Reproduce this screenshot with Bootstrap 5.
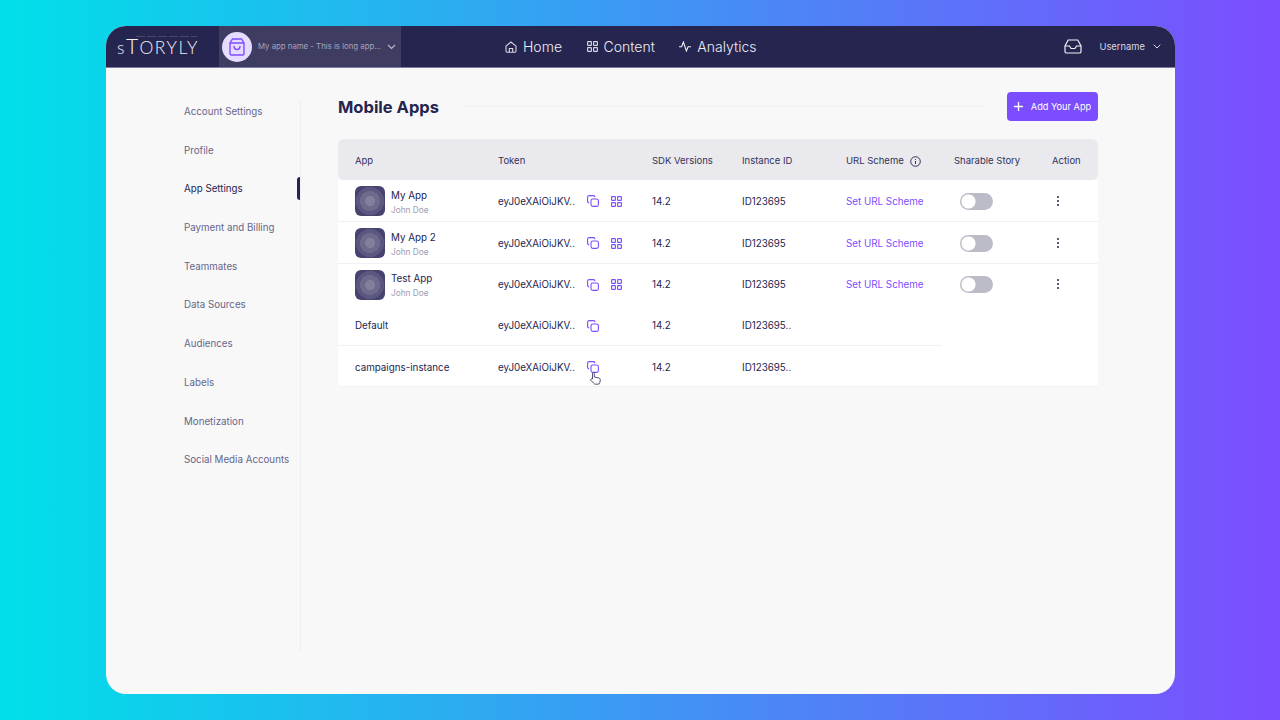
<!DOCTYPE html>
<html lang="en">
<head>
<meta charset="utf-8">
<title>Mobile Apps</title>
<link href="https://cdn.jsdelivr.net/npm/bootstrap@5.3.0/dist/css/bootstrap.min.css" rel="stylesheet">
<style>
html,body{height:720px;overflow:hidden}
body{background:linear-gradient(90deg,#00e0e9 0%,#7c4dff 100%);font-family:Inter,"Noto Sans",sans-serif;color:#24244f;padding:26px 105px 26px 106px}
.app-window{height:668px;background:#f8f8f8;border-radius:20px;overflow:hidden}
.top-bar{height:42px;background:#25254f;border-bottom:1px solid #7d7ca0;color:#fff}
.brand-text{width:113px;padding-left:11px;font-family:Lato,sans-serif;font-weight:300;font-size:17.5px;letter-spacing:1.45px;color:#f2f2f6;white-space:nowrap}
.brand-mark{position:relative;margin-top:3px}
.brand-mark::before{content:"";position:absolute;left:19px;right:2px;top:1px;height:1px;background:repeating-linear-gradient(90deg,rgba(255,255,255,.16) 0 9px,transparent 9px 11px)}
.brand-tee{font-size:21px;line-height:1}
.app-picker{width:182px;background:#3f3c62;padding-left:3px;padding-right:5px}
.app-bubble{width:30px;height:30px;border-radius:50%;background:#e6dcff;flex:none}
.app-picker-name{font-size:7.8px;color:#a5a4bb;margin-left:6px;width:131px;white-space:nowrap}
.nav-group{margin-left:104px;gap:24.5px}
.nav-entry{font-size:14px;font-weight:300;color:#eeeef4;gap:6px;text-decoration:none}
.user-group{margin-left:auto;padding-right:14px}
.user-name{font-size:9.4px;color:#d9d9e4;margin:2px 8px 0 17px}
.side-col{width:195px;height:553px;margin-top:31px;border-right:1px solid #eeeef2;padding-left:78px}
.side-list{margin-top:-6px}
.side-link{display:flex;align-items:center;height:38.7px;font-size:9.75px;color:#66668a;white-space:nowrap;text-decoration:none}
.side-link.is-on{color:#25254f;position:relative}
.side-marker{position:absolute;left:113px;top:7px;width:3px;height:23px;background:#25254f;border-radius:3px 0 0 3px}
.main-col{width:760px;margin-left:37px}
.head-row{height:29px;margin-top:24px;margin-bottom:18px}
.page-title{font-size:16.5px;font-weight:700;margin:3px 0 0;white-space:nowrap;color:#25254f}
.head-rule{flex:1;height:1px;background:#f0f0f3;margin:0 22px 0 24px}
.add-btn{height:29px;width:91px;background:#7c4dff;border:0;border-radius:4px;color:#fff;font-size:9.2px;padding:0;gap:8px}
.add-btn:hover{background:#7c4dff;color:#fff}
.app-table{table-layout:fixed;width:760px;margin:0;border-collapse:separate;border-spacing:0;font-size:9.8px;color:#25254f}
.app-table th{height:41px;background:#e9e9ee;font-weight:400;font-size:9.5px;color:#32325a;padding:3px 0 0;vertical-align:middle}
.app-table th:first-child{border-radius:6px 0 0 6px;padding-left:17px}
.app-table th:last-child{border-radius:0 6px 6px 0}
.app-table th.share-head{padding-left:12px}
.app-table td{height:41px;background:#fff;padding:3px 0 0;vertical-align:middle;border-bottom:1px solid #f1f1f4;white-space:nowrap}
.app-table td.media-cell{padding-top:1px}
.app-table tr.tall-row td{height:42px}
.app-table td:first-child{padding-left:17px}
.app-table tr.no-line td{border-bottom-color:transparent}
.app-table td.blank-line{border-bottom-color:transparent}
.app-table tr.end-row td{border-bottom-color:#f1f1f4!important;padding-top:4px}
.app-thumb{width:30px;height:30px;border-radius:6px;background:radial-gradient(circle,#827f9c 0 5px,#6d6a8c 5px 10px,#5a5780 10px 14px,#46436f 14px);flex:none}
.app-text{margin:2px 0 0 6px}
.app-sub{font-size:8.3px;color:#9c9cb2;margin-top:3px;line-height:10px}
.app-name{line-height:12px}
.token-text{width:77px;display:inline-block}
.tool-icons{gap:12px;margin:-2px 0 0 12px}
.set-link{color:#7c4dff;text-decoration:none}
.form-switch .toggle-input{width:33px;height:17px;margin:0;border:0;background-color:#bcbcc9;box-shadow:none;background-image:radial-gradient(circle at 8.5px 50%,#fff 6.7px,transparent 7.4px);background-position:0 0;background-size:auto}
.toggle-wrap{padding:0 0 0 18px;min-height:0;margin:0;display:flex}
.hand-cursor{position:absolute;left:3px;top:11px}
.copy-holder{position:relative}
</style>
</head>
<body>
<div class="app-window d-flex flex-column">
  <header class="top-bar d-flex align-items-stretch flex-shrink-0">
    <div class="brand-text d-flex align-items-center"><span class="brand-mark">s<span class="brand-tee">T</span>ORYLY</span></div>
    <div class="app-picker d-flex align-items-center">
      <span class="app-bubble d-flex align-items-center justify-content-center">
        <svg width="16" height="18" viewBox="0 0 16 18" fill="none" stroke="#7c4dff" stroke-width="1.4"><path d="M3.5 1h9l2.500 4v10.500a1.500 1.500 0 0 1-1.500 1.500h-11A1.500 1.500 0 0 1 1 15.500V5z"/><path d="M1 5h14"/><path d="M5 8.500c0 4 6 4 6 0" stroke-linecap="round"/></svg>
      </span>
      <span class="app-picker-name">My app name - This is long app...</span>
      <svg class="flex-shrink-0" width="9" height="6" viewBox="0 0 9 6" fill="none" stroke="#b9b8cc" stroke-width="1.200"><path d="M1 1l3.500 3.500L8 1"/></svg>
    </div>
    <nav class="nav-group d-flex align-items-center">
      <a class="nav-entry d-flex align-items-center" href="#">
        <svg width="12" height="12" viewBox="0 0 12 12" fill="none" stroke="#d8d8e4" stroke-width="1.100"><path d="M1 5.200L6 1l5 4.200V10a1.200 1.200 0 0 1-1.200 1.200H2.200A1.200 1.200 0 0 1 1 10z"/><path d="M4.300 11V7.500h3.400V11"/></svg>Home</a>
      <a class="nav-entry d-flex align-items-center" href="#">
        <svg width="11" height="11" viewBox="0 0 11 11" fill="none" stroke="#d8d8e4" stroke-width="1.100"><rect x=".6" y=".6" width="3.800" height="3.800" rx=".5"/><rect x="6.600" y=".6" width="3.800" height="3.800" rx=".5"/><rect x=".6" y="6.600" width="3.800" height="3.800" rx=".5"/><rect x="6.600" y="6.600" width="3.800" height="3.800" rx=".5"/></svg>Content</a>
      <a class="nav-entry d-flex align-items-center" href="#">
        <svg width="12" height="11" viewBox="0 0 12 11" fill="none" stroke="#eeeef4" stroke-width="1.100"><path d="M0 5.800h2.600L4.400 1l3 9 1.700-4.200H12"/></svg>Analytics</a>
    </nav>
    <div class="user-group d-flex align-items-center">
      <svg width="18" height="15" viewBox="0 0 18 15" fill="none" stroke="#f2f2f6" stroke-width="1.200"><path d="M4.200 1h9.600L17 7v5.500a1.500 1.500 0 0 1-1.500 1.500h-13A1.500 1.500 0 0 1 1 12.500V7z"/><path d="M1 7h4.500l1.500 2.500h4L12.500 7H17"/></svg>
      <span class="user-name">Username</span>
      <svg width="8" height="5" viewBox="0 0 8 5" fill="none" stroke="#d9d9e4" stroke-width="1"><path d="M.7.7L4 4 7.300.7"/></svg>
    </div>
  </header>
  <div class="d-flex flex-grow-1">
    <aside class="side-col flex-shrink-0">
      <div class="side-list">
      <a class="side-link" href="#">Account Settings</a>
      <a class="side-link" href="#">Profile</a>
      <a class="side-link is-on" href="#">App Settings<span class="side-marker"></span></a>
      <a class="side-link" href="#">Payment and Billing</a>
      <a class="side-link" href="#">Teammates</a>
      <a class="side-link" href="#">Data Sources</a>
      <a class="side-link" href="#">Audiences</a>
      <a class="side-link" href="#">Labels</a>
      <a class="side-link" href="#">Monetization</a>
      <a class="side-link" href="#">Social Media Accounts</a>
      </div>
    </aside>
    <main class="main-col">
      <div class="head-row d-flex align-items-center">
        <h1 class="page-title">Mobile Apps</h1>
        <div class="head-rule"></div>
        <button class="add-btn btn d-flex align-items-center justify-content-center" type="button">
          <svg width="9" height="9" viewBox="0 0 9 9" stroke="#fff" stroke-width="1.300"><path d="M4.500 0v9M0 4.500h9"/></svg>Add Your App</button>
      </div>
      <table class="app-table">
        <colgroup><col style="width:160px"><col style="width:154px"><col style="width:90px"><col style="width:104px"><col style="width:96px"><col style="width:110px"><col style="width:46px"></colgroup>
        <thead><tr>
          <th>App</th><th>Token</th><th>SDK Versions</th><th>Instance ID</th>
          <th class="text-nowrap">URL Scheme <svg class="ms-1" width="11" height="11" viewBox="0 0 11 11" fill="none" stroke="#32325a" stroke-width="1"><circle cx="5.500" cy="5.500" r="4.800"/><path d="M5.500 5v3M5.500 3v.9"/></svg></th>
          <th class="share-head">Sharable Story</th><th>Action</th>
        </tr></thead>
        <tbody>
          <tr class="tall-row">
            <td class="media-cell"><div class="d-flex align-items-center"><span class="app-thumb"></span><div class="app-text"><div class="app-name">My App</div><div class="app-sub">John Doe</div></div></div></td>
            <td><div class="d-flex align-items-center"><span class="token-text">eyJ0eXAiOiJKV..</span><span class="tool-icons d-flex align-items-center">
              <svg width="12" height="12" viewBox="0 0 12 12" fill="none" stroke="#7c4dff" stroke-width="1.100"><rect x="4" y="4" width="7.400" height="7.400" rx="1.800"/><path d="M8 2.200A1.700 1.700 0 0 0 6.400.6H2.300A1.700 1.700 0 0 0 .6 2.300v4.100A1.700 1.700 0 0 0 2.200 8"/></svg>
              <svg width="11" height="11" viewBox="0 0 11 11" fill="none" stroke="#7c4dff" stroke-width="1.100"><rect x=".6" y=".6" width="3.800" height="3.800" rx=".5"/><rect x="6.600" y=".6" width="3.800" height="3.800" rx=".5"/><rect x=".6" y="6.600" width="3.800" height="3.800" rx=".5"/><rect x="6.600" y="6.600" width="3.800" height="3.800" rx=".5"/></svg>
            </span></div></td>
            <td>14.2</td><td>ID123695</td><td><a class="set-link" href="#">Set URL Scheme</a></td>
            <td class="media-cell"><div class="form-check form-switch toggle-wrap"><input class="form-check-input toggle-input" type="checkbox" role="switch"></div></td>
            <td class="media-cell"><svg class="ms-1" width="4" height="12" viewBox="0 0 4 12" fill="#25254f"><circle cx="2" cy="2" r="1"/><circle cx="2" cy="6" r="1"/><circle cx="2" cy="10" r="1"/></svg></td>
          </tr>
          <tr class="tall-row">
            <td class="media-cell"><div class="d-flex align-items-center"><span class="app-thumb"></span><div class="app-text"><div class="app-name">My App 2</div><div class="app-sub">John Doe</div></div></div></td>
            <td><div class="d-flex align-items-center"><span class="token-text">eyJ0eXAiOiJKV..</span><span class="tool-icons d-flex align-items-center">
              <svg width="12" height="12" viewBox="0 0 12 12" fill="none" stroke="#7c4dff" stroke-width="1.100"><rect x="4" y="4" width="7.400" height="7.400" rx="1.800"/><path d="M8 2.200A1.700 1.700 0 0 0 6.400.6H2.300A1.700 1.700 0 0 0 .6 2.300v4.100A1.700 1.700 0 0 0 2.200 8"/></svg>
              <svg width="11" height="11" viewBox="0 0 11 11" fill="none" stroke="#7c4dff" stroke-width="1.100"><rect x=".6" y=".6" width="3.800" height="3.800" rx=".5"/><rect x="6.600" y=".6" width="3.800" height="3.800" rx=".5"/><rect x=".6" y="6.600" width="3.800" height="3.800" rx=".5"/><rect x="6.600" y="6.600" width="3.800" height="3.800" rx=".5"/></svg>
            </span></div></td>
            <td>14.2</td><td>ID123695</td><td><a class="set-link" href="#">Set URL Scheme</a></td>
            <td class="media-cell"><div class="form-check form-switch toggle-wrap"><input class="form-check-input toggle-input" type="checkbox" role="switch"></div></td>
            <td class="media-cell"><svg class="ms-1" width="4" height="12" viewBox="0 0 4 12" fill="#25254f"><circle cx="2" cy="2" r="1"/><circle cx="2" cy="6" r="1"/><circle cx="2" cy="10" r="1"/></svg></td>
          </tr>
          <tr class="no-line">
            <td class="media-cell"><div class="d-flex align-items-center"><span class="app-thumb"></span><div class="app-text"><div class="app-name">Test App</div><div class="app-sub">John Doe</div></div></div></td>
            <td><div class="d-flex align-items-center"><span class="token-text">eyJ0eXAiOiJKV..</span><span class="tool-icons d-flex align-items-center">
              <svg width="12" height="12" viewBox="0 0 12 12" fill="none" stroke="#7c4dff" stroke-width="1.100"><rect x="4" y="4" width="7.400" height="7.400" rx="1.800"/><path d="M8 2.200A1.700 1.700 0 0 0 6.400.6H2.300A1.700 1.700 0 0 0 .6 2.300v4.100A1.700 1.700 0 0 0 2.200 8"/></svg>
              <svg width="11" height="11" viewBox="0 0 11 11" fill="none" stroke="#7c4dff" stroke-width="1.100"><rect x=".6" y=".6" width="3.800" height="3.800" rx=".5"/><rect x="6.600" y=".6" width="3.800" height="3.800" rx=".5"/><rect x=".6" y="6.600" width="3.800" height="3.800" rx=".5"/><rect x="6.600" y="6.600" width="3.800" height="3.800" rx=".5"/></svg>
            </span></div></td>
            <td>14.2</td><td>ID123695</td><td><a class="set-link" href="#">Set URL Scheme</a></td>
            <td class="media-cell"><div class="form-check form-switch toggle-wrap"><input class="form-check-input toggle-input" type="checkbox" role="switch"></div></td>
            <td class="media-cell"><svg class="ms-1" width="4" height="12" viewBox="0 0 4 12" fill="#25254f"><circle cx="2" cy="2" r="1"/><circle cx="2" cy="6" r="1"/><circle cx="2" cy="10" r="1"/></svg></td>
          </tr>
          <tr>
            <td>Default</td>
            <td><div class="d-flex align-items-center"><span class="token-text">eyJ0eXAiOiJKV..</span><span class="tool-icons d-flex align-items-center">
              <svg width="12" height="12" viewBox="0 0 12 12" fill="none" stroke="#7c4dff" stroke-width="1.100"><rect x="4" y="4" width="7.400" height="7.400" rx="1.800"/><path d="M8 2.200A1.700 1.700 0 0 0 6.400.6H2.300A1.700 1.700 0 0 0 .6 2.300v4.100A1.700 1.700 0 0 0 2.200 8"/></svg>
            </span></div></td>
            <td>14.2</td><td>ID123695..</td><td></td><td class="blank-line"></td><td class="blank-line"></td>
          </tr>
          <tr class="end-row">
            <td>campaigns-instance</td>
            <td><div class="d-flex align-items-center"><span class="token-text">eyJ0eXAiOiJKV..</span><span class="copy-holder tool-icons d-flex align-items-center">
              <svg width="12" height="12" viewBox="0 0 12 12" fill="none" stroke="#7c4dff" stroke-width="1.100"><rect x="4" y="4" width="7.400" height="7.400" rx="1.800"/><path d="M8 2.200A1.700 1.700 0 0 0 6.400.6H2.300A1.700 1.700 0 0 0 .6 2.300v4.100A1.700 1.700 0 0 0 2.200 8"/></svg>
              <svg class="hand-cursor" width="11" height="13" viewBox="0 0 11 13" fill="#fff" stroke="#25254f" stroke-width=".8"><path d="M2.500 7V1.500a.9.900 0 0 1 1.800 0V5l4 .8c1.300.3 2 1 2 2.200l-.5 2.700c-.2.900-.8 1.500-1.800 1.500H5.500c-.8 0-1.300-.3-1.800-1L.8 8.200c-.6-1 .6-2 1.700-1.200z"/></svg>
            </span></div></td>
            <td>14.2</td><td>ID123695..</td><td></td><td></td><td></td>
          </tr>
        </tbody>
      </table>
    </main>
  </div>
</div>
</body>
</html>
